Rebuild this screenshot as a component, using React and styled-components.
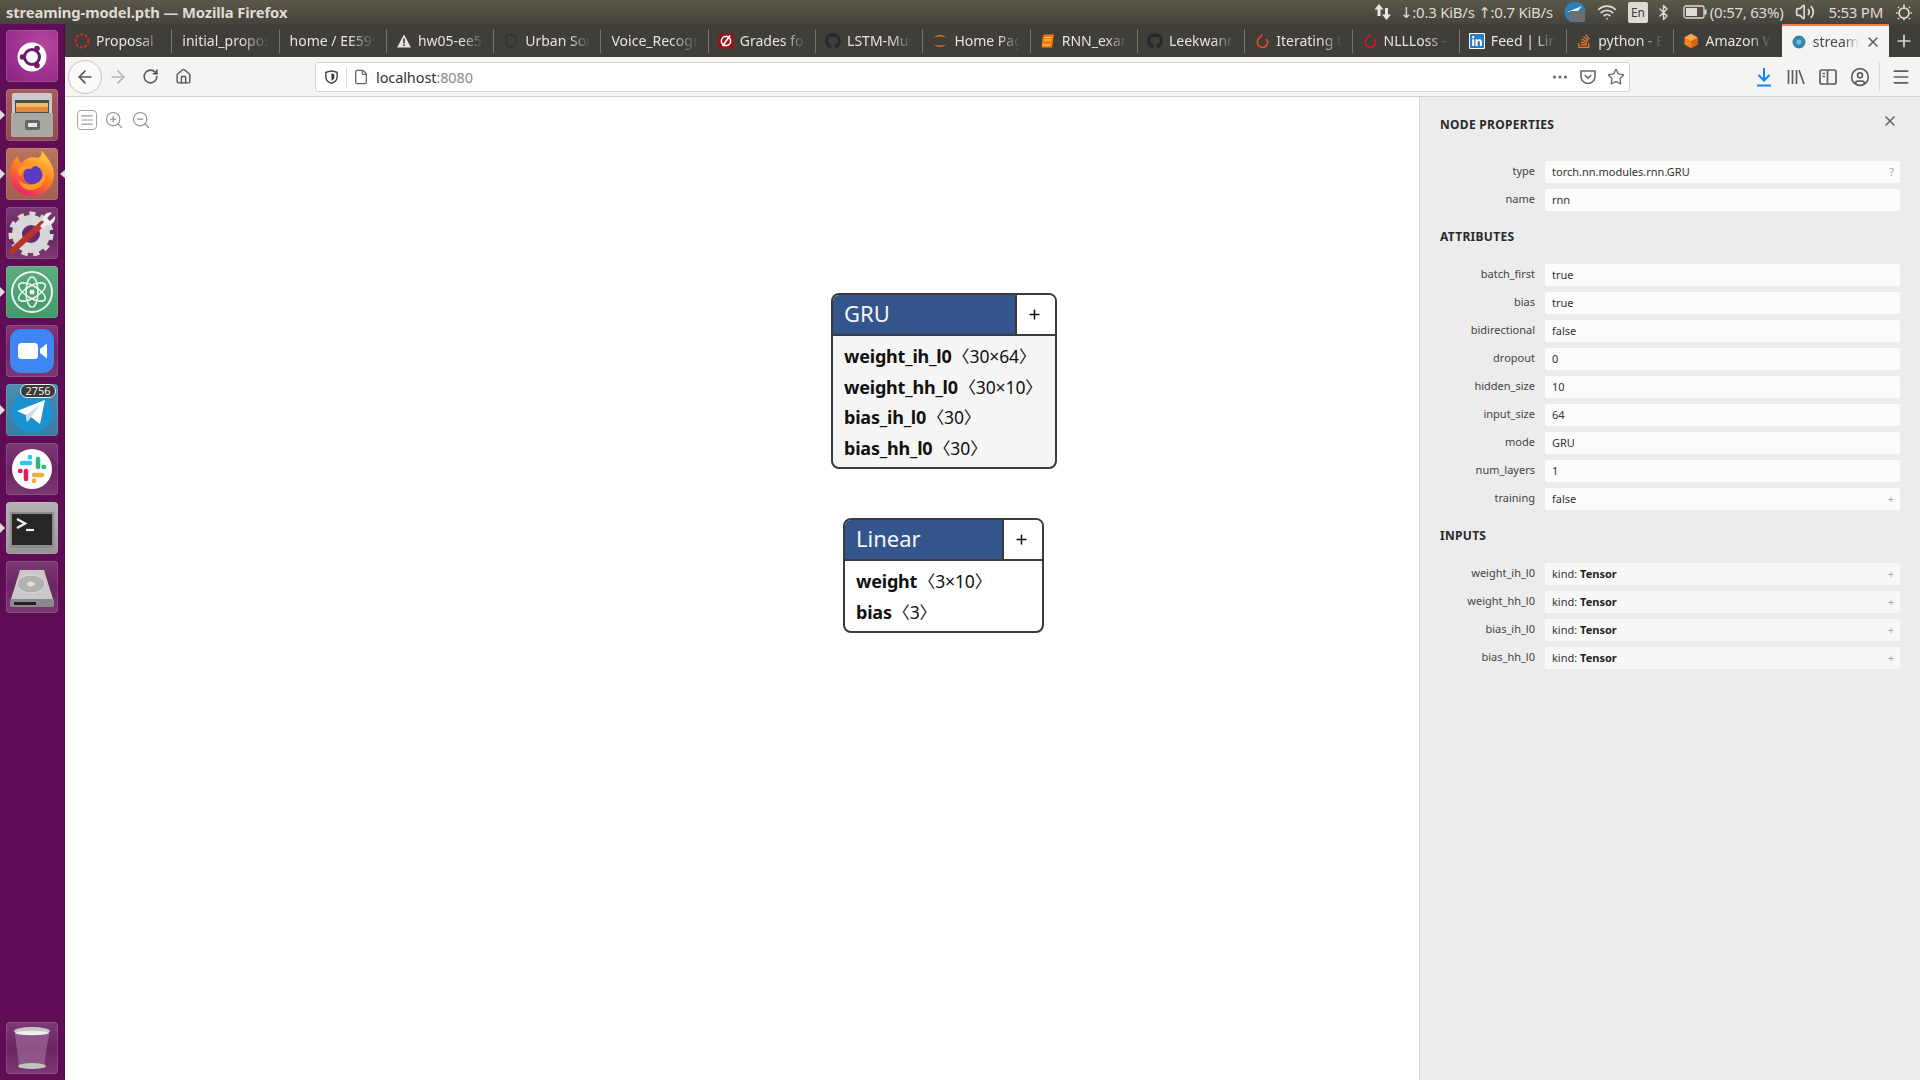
import React from "react";
import styled, { createGlobalStyle } from "styled-components";
import {
  ArrowLeft, ArrowRight, RotateCw, Home, File, Star, Menu, Plus, X, Bluetooth, Wifi, Volume2,
  ZoomIn, ZoomOut, CircleUser, AlignJustify,
} from "lucide-react";
import { FaGithub, FaLinkedin, FaStackOverflow } from "react-icons/fa";

const UI_FONT = `"Noto Sans", "Open Sans", "DejaVu Sans", sans-serif`;

const GlobalStyle = createGlobalStyle`
  html, body { margin: 0; padding: 0; background: #fff; }
  * { box-sizing: border-box; }
  body { font-family: ${UI_FONT}; }
`;

const Screen = styled.div`
  width: 1920px;
  height: 1080px;
  overflow: hidden;
  display: flex;
  flex-direction: column;
`;

const TitleBar = styled.div`
  height: 24px;
  flex: none;
  display: flex;
  align-items: center;
  justify-content: space-between;
  padding: 0 0 0 6px;
  background: linear-gradient(#5b574a, #45433c);
  color: #dfdbd2;
`;

const WindowTitle = styled.div`
  font-size: 14.75px;
  font-weight: 700;
  letter-spacing: -0.1px;
  white-space: nowrap;
`;

const Tray = styled.div`
  display: flex;
  align-items: center;
  height: 24px;
  font-size: 15px;
  letter-spacing: -0.25px;
  white-space: nowrap;
  color: #dfdbd2;
`;

const TrayItem = styled.div`
  display: flex;
  align-items: center;
  margin-left: ${(p) => p.$ml || 0}px;
`;

const LangBadge = styled.div`
  width: 20px;
  height: 21px;
  background: #dfdbd2;
  color: #3c3b37;
  border-radius: 2px;
  font-size: 12px;
  line-height: 21px;
  text-align: center;
`;

const Body = styled.div`
  flex: 1;
  display: flex;
  min-height: 0;
`;

const Dock = styled.div`
  width: 65px;
  flex: none;
  background: #5f0e56;
  padding: 6px 0 6px 6px;
  display: flex;
  flex-direction: column;
  gap: 7px;
  border-right: 1px solid #4f0a47;
`;

const Tile = styled.div`
  position: relative;
  width: 52px;
  height: 52px;
  border-radius: 4px;
  background: ${(p) => p.$bg || "linear-gradient(#7d3a74, #6b2462 50%, #7a3a72)"};
  box-shadow: inset 0 0 0 1px rgba(255, 255, 255, 0.12);
  margin-top: ${(p) => (p.$bottom ? "auto" : "0")};

  svg { display: block; }
`;

const RunMark = styled.span`
  position: absolute;
  top: 21px;
  left: ${(p) => (p.$right ? "54px" : "-6px")};
  width: 0;
  height: 0;
  border-top: 5px solid transparent;
  border-bottom: 5px solid transparent;
  ${(p) => (p.$right ? "border-right: 6px solid #ddd;" : "border-left: 5px solid #ddd;")}
`;

const Badge = styled.span`
  position: absolute;
  top: 0;
  right: 2px;
  width: 36px;
  height: 14px;
  background: #3a3a3a;
  border: 1px solid #eee;
  border-radius: 7px;
  color: #eee;
  font-size: 11px;
  line-height: 12px;
  text-align: center;
`;

const Browser = styled.div`
  flex: 1;
  min-width: 0;
  display: flex;
  flex-direction: column;
`;

const TabStrip = styled.div`
  height: 33px;
  flex: none;
  display: flex;
  background: #3f3e39;
`;

const Tab = styled.div`
  width: ${(p) => (p.$active ? "107px" : "107.3px")};
  flex: none;
  position: relative;
  display: flex;
  align-items: center;
  gap: 6px;
  padding-left: ${(p) => (p.$plain ? "10px" : "9px")};
  padding-right: ${(p) => (p.$active ? 8 : 11)}px;
  font-size: 14px;
  white-space: nowrap;
  color: ${(p) => (p.$active ? "#4a4a4f" : "#e6e3dc")};
  background: ${(p) => (p.$active ? "#f5f4f3" : "transparent")};
  border-top: ${(p) => (p.$active ? "2px solid #e8805a" : "none")};

  &::after {
    content: "";
    display: ${(p) => (p.$active || p.$last ? "none" : "block")};
    position: absolute;
    right: 0;
    top: 5px;
    bottom: 4px;
    width: 1px;
    background: #77756f;
  }
`;

const TabLabel = styled.span`
  flex: 1;
  min-width: 0;
  overflow: hidden;
  -webkit-mask-image: linear-gradient(to right, #000 68%, transparent 100%);
  mask-image: linear-gradient(to right, #000 68%, transparent 100%);
`;

const NewTab = styled.div`
  flex: 1;
  display: flex;
  align-items: center;
  justify-content: center;
  color: #d8d5ce;
`;

const Toolbar = styled.div`
  height: 40px;
  flex: none;
  display: flex;
  align-items: center;
  padding-left: 3px;
  background: #f5f4f3;
  border-bottom: 1px solid #cfcfcf;
  color: #5a5a5e;
`;

const NavButton = styled.div`
  width: ${(p) => (p.$round ? 34 : 32.5)}px;
  height: ${(p) => (p.$round ? 34 : 33)}px;
  flex: none;
  display: flex;
  align-items: center;
  justify-content: center;
  border-radius: 50%;
  background: ${(p) => (p.$round ? "#fafafa" : "transparent")};
  border: ${(p) => (p.$round ? "1px solid #c4c4c4" : "none")};
  color: ${(p) => (p.$muted ? "#b4b4b4" : "#55555a")};
`;

const UrlBar = styled.div`
  width: 1315px;
  height: 30px;
  flex: none;
  margin-left: 115.5px;
  display: flex;
  align-items: center;
  background: #fff;
  border: 1px solid #d4d4d4;
  border-radius: 3px;
  padding: 0 0 0 8px;
  font-size: 14.5px;
  color: #333;
`;

const UrlSep = styled.span`
  width: 1px;
  height: 20px;
  background: #ddd;
  margin: 0 6px 0 7px;
`;

const UrlHost = styled.span`
  margin-left: 7px;
  letter-spacing: -0.1px;
`;

const UrlPort = styled.span`
  color: #8a8a8a;
`;

const UrlActions = styled.div`
  margin-left: auto;
  display: flex;
  align-items: center;
  gap: 10px;
  padding-right: 4px;
  color: #6a6a6e;
`;

const ToolGroup = styled.div`
  display: flex;
  align-items: center;
  margin-left: 124px;
  gap: 12px;
  color: #5f5f64;
`;

const ToolSep = styled.span`
  width: 1px;
  height: 30px;
  background: #dcdcdc;
  margin: 0 -1px 0 -3px;
`;

const Content = styled.div`
  flex: 1;
  display: flex;
  min-height: 0;
`;

const Canvas = styled.div`
  flex: 1;
  position: relative;
  background: #fff;
`;

const CanvasTools = styled.div`
  position: absolute;
  left: 12px;
  top: 13px;
  display: flex;
  align-items: center;
  gap: 7px;
  color: #8f8f8f;
`;

const ListIcon = styled.div`
  width: 20px;
  height: 20px;
  border: 1.5px solid #a4a4a4;
  border-radius: 4px;
  display: flex;
  align-items: center;
  justify-content: center;
  color: #9a9a9a;
`;

const Node = styled.div`
  position: absolute;
  left: ${(p) => p.$x}px;
  top: ${(p) => p.$y}px;
  width: ${(p) => p.$w}px;
  border: 2px solid #3b3b3b;
  border-radius: 8px;
  overflow: hidden;
  background: ${(p) => p.$bg};
  font-family: ${UI_FONT};
`;

const NodeHeader = styled.div`
  height: 41px;
  display: flex;
  border-bottom: 2px solid #3b3b3b;
`;

const NodeTitle = styled.div`
  flex: 1;
  background: #34558b;
  color: #f4f6fa;
  font-size: 22px;
  line-height: 36px;
  padding-left: 11px;
`;

const NodeButton = styled.div`
  width: 40px;
  flex: none;
  background: #fff;
  border-left: 2px solid #3b3b3b;
  padding-right: 3px;
  display: flex;
  align-items: center;
  justify-content: center;
  color: #111;
`;

const NodeBody = styled.div`
  padding: 5px 11px 4px;
`;

const NodeRow = styled.div`
  height: 30.6px;
  line-height: 30.6px;
  font-size: 18px;
  color: #111;
  white-space: nowrap;
`;

const AttrName = styled.span`
  font-weight: 700;
  letter-spacing: -0.2px;
`;

const Shape = styled.span`
  margin-left: 1px;
  font-size: 17.5px;
  font-weight: 400;
  letter-spacing: -0.1px;
`;

const Bracket = styled.span`
  font-family: "Noto Sans CJK SC", "DejaVu Sans", sans-serif;
  font-size: 17px;
`;

const Panel = styled.aside`
  width: 501px;
  flex: none;
  background: #ececec;
  border-left: 1px solid #d8d8d8;
  position: relative;
  padding-top: 1px;
  font-size: 11px;
  color: #333;
`;

const PanelHead = styled.div`
  height: 63px;
  padding: 19px 0 0 20px;
`;

const SectionTitle = styled.div`
  font-size: 12px;
  font-weight: 700;
  line-height: 16px;
  color: #2a2a2a;
  letter-spacing: 0.3px;
`;

const SectionBlock = styled.div`
  height: 47px;
  padding: 12px 0 0 20px;
`;

const CloseBtn = styled.div`
  position: absolute;
  top: 16px;
  right: 22px;
  color: #666;
  display: flex;
`;

const PropRow = styled.div`
  display: grid;
  grid-template-columns: 115px 355px;
  column-gap: 10px;
  height: 22px;
  margin-bottom: 6px;
`;

const PropLabel = styled.div`
  text-align: right;
  line-height: 20px;
  color: #444;
  white-space: nowrap;
`;

const PropValue = styled.div`
  display: flex;
  align-items: center;
  justify-content: space-between;
  padding: 0 6px 2px 7px;
  background: ${(p) => (p.$soft ? "#f8f8f8" : "#fcfcfc")};
  border-radius: 2px;
  color: #333;
  white-space: nowrap;
`;

const PropHint = styled.span`
  color: #aaa;
  font-size: 11px;
`;

const Strong = styled.b`
  font-weight: 700;
  color: #222;
`;

const Fav = ({ children }) => (
  <svg width="16" height="16" viewBox="0 0 16 16" style={{ flex: "none" }}>{children}</svg>
);

const favicons = {
  ring: <Fav><circle cx="8" cy="8" r="6.4" fill="none" stroke="#e0262d" strokeWidth="2" strokeDasharray="3 1.6" /></Fav>,
  warn: <Fav><path d="M8 1.5 15 14.5H1Z" fill="#e9e6df" /><rect x="7.2" y="5.5" width="1.6" height="5" fill="#3f3e39" /><rect x="7.2" y="11.4" width="1.6" height="1.6" fill="#3f3e39" /></Fav>,
  shield: <Fav><path d="M3 3 8 1.5 13 3V9C13 12 10 14 8 14.5 6 14 3 12 3 9Z" fill="none" stroke="#2d3138" strokeWidth="1.4" /></Fav>,
  grades: <Fav><rect x="0.5" y="0.5" width="15" height="15" fill="#a30c12" /><circle cx="8" cy="8" r="4.6" fill="none" stroke="#fff" strokeWidth="1.6" /><path d="M4.6 13 12 2.5" stroke="#fff" strokeWidth="1.6" /></Fav>,
  github: <FaGithub size={16} color="#24292e" style={{ flex: "none" }} />,
  jupyter: <Fav><path d="M2 5C4 1 12 1 14 5 12 3 4 3 2 5ZM2 11C4 15 12 15 14 11 12 13 4 13 2 11Z" fill="#e8711f" /></Fav>,
  book: <Fav><path d="M4 1.5H14L12 14.5H1.5L2.8 3Z" fill="#f57c00" /><path d="M4.5 4.5H11.5M4 7H11M3 12H10.5" stroke="#ffd9a8" strokeWidth="0.9" /></Fav>,
  torch: <Fav><path d="M8.5 1.5 5 5.2C2.5 7.5 3 11 5 13 7 15 10.5 15 12.3 12.8 14 10.7 13.7 7.9 12 6" fill="none" stroke="#ee4c2c" strokeWidth="1.5" /></Fav>,
  torchRed: <Fav><path d="M8.5 1.5 5 5.2C2.5 7.5 3 11 5 13 7 15 10.5 15 12.3 12.8 14 10.7 13.7 7.9 12 6" fill="none" stroke="#e3122c" strokeWidth="1.5" /></Fav>,
  linkedin: <FaLinkedin size={16} color="#2a78c8" style={{ flex: "none", background: "#fff", borderRadius: 1 }} />,
  so: <FaStackOverflow size={16} color="#e87922" style={{ flex: "none" }} />,
  cube: <Fav><path d="M8 0.8 14.5 4.4V11.6L8 15.2 1.5 11.6V4.4Z" fill="#f58220" /><path d="M8 8 14.5 4.4V11.6L8 15.2Z" fill="#d9660f" /><path d="M8 0.8 14.5 4.4 8 8 1.5 4.4Z" fill="#fba64b" /></Fav>,
  stream: <Fav><circle cx="8" cy="8" r="6.5" fill="#2f87b0" /><circle cx="8" cy="8" r="2.5" fill="#7fb7d2" /></Fav>,
};

const tabs = [
  { text: "Proposal", icon: "ring" },
  { text: "initial_proposal" },
  { text: "home / EE599" },
  { text: "hw05-ee599", icon: "warn" },
  { text: "Urban Sound", icon: "shield" },
  { text: "Voice_Recognition" },
  { text: "Grades for", icon: "grades" },
  { text: "LSTM-Music", icon: "github" },
  { text: "Home Page", icon: "jupyter" },
  { text: "RNN_example", icon: "book" },
  { text: "Leekwann", icon: "github" },
  { text: "Iterating th", icon: "torch" },
  { text: "NLLLoss —", icon: "torchRed" },
  { text: "Feed | LinkedIn", icon: "linkedin" },
  { text: "python - Bat", icon: "so" },
  { text: "Amazon Web", icon: "cube", last: true },
];

const PocketIcon = () => (
  <svg width="18" height="18" viewBox="0 0 18 18" fill="none" stroke="currentColor" strokeWidth="1.6">
    <path d="M2 3H16V8.5C16 12.5 12.5 15.5 9 15.5 5.5 15.5 2 12.5 2 8.5Z" />
    <path d="M5.8 7.2 9 10.2 12.2 7.2" />
  </svg>
);

const ShieldIcon = () => (
  <svg width="15" height="16" viewBox="0 0 16 16" fill="none" stroke="currentColor" strokeWidth="1.4">
    <path d="M8 1.5 14 3V8C14 11.5 10.5 14 8 14.8 5.5 14 2 11.5 2 8V3Z" />
    <path d="M8 4 11 5V8C11 10 9.5 11.3 8 12Z" fill="currentColor" stroke="none" />
  </svg>
);

const DotsIcon = () => (
  <svg width="18" height="18" viewBox="0 0 18 18" fill="currentColor">
    <circle cx="3.5" cy="9" r="1.6" /><circle cx="9" cy="9" r="1.6" /><circle cx="14.5" cy="9" r="1.6" />
  </svg>
);

const DownloadIcon = () => (
  <svg width="20" height="22" viewBox="0 0 20 22" fill="none" stroke="#0a84ff" strokeWidth="2">
    <path d="M10 2V14M4.5 9 10 14.5 15.5 9" /><path d="M3 19.5H17" />
  </svg>
);

const LibraryIcon = () => (
  <svg width="20" height="20" viewBox="0 0 20 20" fill="none" stroke="currentColor" strokeWidth="1.7">
    <path d="M2.5 3V17M6.5 3V17M10.5 3V17M13 3 18 17" />
  </svg>
);

const SidebarIcon = () => (
  <svg width="20" height="20" viewBox="0 0 20 20" fill="none" stroke="currentColor" strokeWidth="1.7">
    <rect x="2" y="3" width="16" height="14" rx="2" /><path d="M9.5 3V17" /><path d="M4.5 6.5H7M4.5 9.5H7" />
  </svg>
);

const PowerGear = () => (
  <svg width="18" height="18" viewBox="0 0 18 18" fill="none" stroke="#dfdbd2" strokeWidth="1.7">
    <circle cx="9" cy="10" r="5" />
    <path d="M9 1.5V6M9 15V17M2.5 10H1M17 10H15.5M4 5 3 4M14 5 15 4M4 15 3 16M14 15 15 16" />
  </svg>
);

const NetArrows = () => (
  <svg width="20" height="20" viewBox="0 0 20 20" fill="#e8e5dd">
    <path d="M6 2 10.5 7.5H7.5V14H4.5V7.5H1.5Z" /><path d="M13.5 18 9 12.5H12V6H15V12.5H18Z" />
  </svg>
);

const TelegramTray = () => (
  <svg width="22" height="22" viewBox="0 0 22 22">
    <circle cx="11" cy="11" r="10.5" fill="#2b7fb8" />
    <path d="M3 11 18 5 14 10Z" fill="#e8eef2" />
    <rect x="5" y="10" width="16" height="11" rx="2" fill="#6a7076" />
  </svg>
);

const BatteryIcon = () => (
  <svg width="24" height="14" viewBox="0 0 24 14" fill="none">
    <rect x="1" y="1" width="20" height="12" rx="2" stroke="#dfdbd2" strokeWidth="1.3" />
    <rect x="3" y="3" width="11" height="8" fill="#dfdbd2" />
    <rect x="21.5" y="4.5" width="2" height="5" fill="#dfdbd2" />
  </svg>
);

const UbuntuIcon = () => (
  <svg width="52" height="52" viewBox="0 0 52 52">
    <circle cx="26" cy="27" r="14.5" fill="#fff" />
    <circle cx="26" cy="27" r="7.5" fill="none" stroke="#6b1d63" strokeWidth="3" />
    <circle cx="16.5" cy="27" r="2.8" fill="#6b1d63" /><circle cx="31" cy="18.5" r="2.8" fill="#6b1d63" /><circle cx="31" cy="35.5" r="2.8" fill="#6b1d63" />
  </svg>
);

const FilesIcon = () => (
  <svg width="52" height="52" viewBox="0 0 52 52">
    <rect x="6" y="4" width="40" height="24" rx="1.5" fill="#c9c9c9" />
    <rect x="9" y="11" width="34" height="14" fill="#4a4a4a" />
    <rect x="10" y="14" width="32" height="4" fill="#f3b868" />
    <rect x="10" y="18" width="32" height="5" fill="#e2883e" />
    <path d="M5 24H47V46C47 47.5 46 48 45 48H7C6 48 5 47.5 5 46Z" fill="#a9a8a3" />
    <rect x="19" y="31" width="15" height="10" rx="2" fill="#666" />
    <rect x="22" y="34" width="9" height="4" fill="#e8e8e8" />
  </svg>
);

const FirefoxIcon = () => (
  <svg width="52" height="52" viewBox="0 0 52 52">
    <defs>
      <linearGradient id="ffx" x1="0.7" y1="0" x2="0.2" y2="1">
        <stop offset="0" stopColor="#ffd23c" /><stop offset="0.5" stopColor="#ff7a1e" /><stop offset="1" stopColor="#e6197a" />
      </linearGradient>
    </defs>
    <path d="M35 2C40 8 47 15 48 26 48 39 38 48 26 48 13 48 4 38 4 26 4 18 8 11 12 8 12 12 14 15 16 15 19 10 26 8 32 10 36 8 36 5 35 2Z" fill="url(#ffx)" />
    <circle cx="27" cy="27" r="9.5" fill="#5b3bc4" />
    <path d="M12 22C16 16 24 14 32 17 28 18 26 19 25 21 20 20 16 22 15 28 13 28 12 25 12 22Z" fill="#ff9a28" />
    <path d="M38 20C42 30 36 42 25 42 18 42 13 37 13 32 18 38 31 39 36 30 37 27 38 24 38 20Z" fill="#ff9a28" />
  </svg>
);

const SettingsIcon = () => (
  <svg width="52" height="52" viewBox="0 0 52 52">
    <circle cx="25" cy="27" r="14" fill="none" stroke="#d8d8d8" strokeWidth="10" />
    <circle cx="25" cy="27" r="20" fill="none" stroke="#d8d8d8" strokeWidth="5" strokeDasharray="6 5.5" />
    <path d="M6 44 36 17" stroke="#b5342c" strokeWidth="6" strokeLinecap="round" />
    <path d="M34 19 38 15C36 10 40 4 46 6L41 11 44 14 49 9C50 15 45 19 40 18L37 22Z" fill="#eee" />
  </svg>
);

const AtomIcon = () => (
  <svg width="52" height="52" viewBox="0 0 52 52" fill="none" stroke="#e8f4ec" strokeWidth="1.6">
    <circle cx="26" cy="26" r="20" strokeWidth="2" />
    <ellipse cx="26" cy="26" rx="15" ry="6" transform="rotate(30 26 26)" />
    <ellipse cx="26" cy="26" rx="15" ry="6" transform="rotate(90 26 26)" />
    <ellipse cx="26" cy="26" rx="15" ry="6" transform="rotate(150 26 26)" />
    <circle cx="26" cy="26" r="2.5" fill="#e8f4ec" stroke="none" />
  </svg>
);

const ZoomAppIcon = () => (
  <svg width="52" height="52" viewBox="0 0 52 52">
    <rect x="4" y="4" width="44" height="44" rx="11" fill="#3f86f5" />
    <rect x="12" y="18" width="20" height="16" rx="3.5" fill="#fff" />
    <path d="M34 24 41 18.5V33.5L34 28Z" fill="#fff" />
  </svg>
);

const TelegramIcon = () => (
  <svg width="52" height="52" viewBox="0 0 52 52">
    <circle cx="26" cy="28" r="21" fill="#1c93d0" />
    <path d="M11 27 39 16 34 40 25 33 21 38 20 31Z" fill="#fff" />
    <path d="M20 31 35 20 25 33 21 38Z" fill="#c8dcea" />
  </svg>
);

const SlackIcon = () => (
  <svg width="52" height="52" viewBox="0 0 52 52">
    <circle cx="26" cy="26" r="20" fill="#fff" />
    <g strokeWidth="4.5" strokeLinecap="round">
      <path d="M24 20H16" stroke="#36c5f0" /><path d="M24 14V14.5" stroke="#36c5f0" />
      <path d="M32 24V16" stroke="#2eb67d" /><path d="M38 24H37.5" stroke="#2eb67d" />
      <path d="M28 32H36" stroke="#ecb22e" /><path d="M28 38V37.5" stroke="#ecb22e" />
      <path d="M20 28V36" stroke="#e01e5a" /><path d="M14 28H14.5" stroke="#e01e5a" />
    </g>
  </svg>
);

const TerminalIcon = () => (
  <svg width="52" height="52" viewBox="0 0 52 52">
    <rect x="4" y="10" width="44" height="36" rx="1" fill="#8b8b8b" />
    <rect x="6" y="12" width="40" height="31" fill="#262626" />
    <path d="M11 17 19 21.5 11 26" fill="none" stroke="#eee" strokeWidth="2.4" />
    <path d="M20 28H28" stroke="#eee" strokeWidth="2.2" />
  </svg>
);

const DiskIcon = () => (
  <svg width="52" height="52" viewBox="0 0 52 52">
    <path d="M14 9H38L47 38H5Z" fill="#c9c9c9" />
    <ellipse cx="25" cy="23" rx="14" ry="9" fill="#b2b2b2" stroke="#dcdcdc" />
    <ellipse cx="25" cy="23" rx="4" ry="2.5" fill="#dcdcdc" />
    <rect x="4" y="38" width="44" height="8" rx="1.5" fill="#8a8a8a" />
    <rect x="8" y="41" width="22" height="3" fill="#222" />
  </svg>
);

const TrashIcon = () => (
  <svg width="52" height="52" viewBox="0 0 52 52">
    <path d="M9 12 13 44H38L43 12Z" fill="#a77ba4" opacity="0.55" />
    <ellipse cx="26" cy="9" rx="18" ry="4" fill="#c6c6c6" />
    <ellipse cx="26" cy="11" rx="17" ry="2.2" fill="#f0f0f0" />
    <ellipse cx="26" cy="44" rx="14" ry="3" fill="#c4c4c4" />
  </svg>
);

const attributes = [
  ["batch_first", "true"],
  ["bias", "true"],
  ["bidirectional", "false"],
  ["dropout", "0"],
  ["hidden_size", "10"],
  ["input_size", "64"],
  ["mode", "GRU"],
  ["num_layers", "1"],
  ["training", "false", "+"],
];

const inputs = ["weight_ih_l0", "weight_hh_l0", "bias_ih_l0", "bias_hh_l0"];

const ModelNode = ({ title, x, y, w, bg, rows }) => (
  <Node $x={x} $y={y} $w={w} $bg={bg}>
    <NodeHeader>
      <NodeTitle>{title}</NodeTitle>
      <NodeButton><Plus size={15} strokeWidth={2.4} /></NodeButton>
    </NodeHeader>
    <NodeBody>
      {rows.map(([name, shape]) => (
        <NodeRow key={name}>
          <AttrName>{name}</AttrName>
          <Shape><Bracket>〈</Bracket>{shape}<Bracket>〉</Bracket></Shape>
        </NodeRow>
      ))}
    </NodeBody>
  </Node>
);

const App = () => (
  <Screen>
    <GlobalStyle />
    <TitleBar>
      <WindowTitle>streaming-model.pth — Mozilla Firefox</WindowTitle>
      <Tray>
        <NetArrows />
        <TrayItem $ml={7}>↓:0.3 KiB/s ↑:0.7 KiB/s</TrayItem>
        <TrayItem $ml={11}><TelegramTray /></TrayItem>
        <TrayItem $ml={11}><Wifi size={20} strokeWidth={2} /></TrayItem>
        <TrayItem $ml={11}><LangBadge>En</LangBadge></TrayItem>
        <TrayItem $ml={7}><Bluetooth size={17} /></TrayItem>
        <TrayItem $ml={11}><BatteryIcon /></TrayItem>
        <TrayItem $ml={3}>(0:57, 63%)</TrayItem>
        <TrayItem $ml={12}><Volume2 size={20} /></TrayItem>
        <TrayItem $ml={13}>5:53 PM</TrayItem>
        <TrayItem $ml={12}><PowerGear /></TrayItem>
        <TrayItem $ml={7} />
      </Tray>
    </TitleBar>
    <Body>
      <Dock>
        <Tile $bg="radial-gradient(circle at 70% 30%, #b5469f, #8c2183)"><UbuntuIcon /></Tile>
        <Tile $bg="linear-gradient(#a85c5c, #8e4a52)"><RunMark /><FilesIcon /></Tile>
        <Tile $bg="linear-gradient(#b9735f, #a4604f)"><RunMark /><RunMark $right /><FirefoxIcon /></Tile>
        <Tile><SettingsIcon /></Tile>
        <Tile $bg="linear-gradient(#5dab7f, #3f9a68)"><RunMark /><AtomIcon /></Tile>
        <Tile><ZoomAppIcon /></Tile>
        <Tile $bg="linear-gradient(#4b8cb0, #3c7ba3)"><RunMark /><TelegramIcon /><Badge>2756</Badge></Tile>
        <Tile><SlackIcon /></Tile>
        <Tile $bg="linear-gradient(#b5b0b3, #989498)"><RunMark /><TerminalIcon /></Tile>
        <Tile><DiskIcon /></Tile>
        <Tile $bottom><TrashIcon /></Tile>
      </Dock>
      <Browser>
        <TabStrip>
          {tabs.map((tab) => (
            <Tab key={tab.text} $plain={!tab.icon} $last={tab.last}>
              {tab.icon && favicons[tab.icon]}
              <TabLabel>{tab.text}</TabLabel>
            </Tab>
          ))}
          <Tab $active>
            {favicons.stream}
            <TabLabel>streaming</TabLabel>
            <X size={16} color="#55555a" style={{ flex: "none" }} />
          </Tab>
          <NewTab><Plus size={20} /></NewTab>
        </TabStrip>
        <Toolbar>
          <NavButton $round><ArrowLeft size={20} /></NavButton>
          <NavButton $muted><ArrowRight size={20} /></NavButton>
          <NavButton><RotateCw size={17} strokeWidth={2.2} /></NavButton>
          <NavButton><Home size={17} strokeWidth={2} /></NavButton>
          <UrlBar>
            <ShieldIcon />
            <UrlSep />
            <File size={16} color="#6a6a6e" />
            <UrlHost>localhost<UrlPort>:8080</UrlPort></UrlHost>
            <UrlActions>
              <DotsIcon />
              <PocketIcon />
              <Star size={18} strokeWidth={1.8} />
            </UrlActions>
          </UrlBar>
          <ToolGroup>
            <DownloadIcon />
            <LibraryIcon />
            <SidebarIcon />
            <CircleUser size={20} />
            <ToolSep />
            <Menu size={20} />
          </ToolGroup>
        </Toolbar>
        <Content>
          <Canvas>
            <CanvasTools>
              <ListIcon><AlignJustify size={14} /></ListIcon>
              <ZoomIn size={20} strokeWidth={1.4} />
              <ZoomOut size={20} strokeWidth={1.4} />
            </CanvasTools>
            <ModelNode
              title="GRU" x={766} y={196} w={226} bg="#f5f5f5"
              rows={[
                ["weight_ih_l0", "30×64"],
                ["weight_hh_l0", "30×10"],
                ["bias_ih_l0", "30"],
                ["bias_hh_l0", "30"],
              ]}
            />
            <ModelNode
              title="Linear" x={778} y={421} w={201} bg="#fff"
              rows={[
                ["weight", "3×10"],
                ["bias", "3"],
              ]}
            />
          </Canvas>
          <Panel>
            <PanelHead><SectionTitle>NODE PROPERTIES</SectionTitle></PanelHead>
            <CloseBtn><X size={16} strokeWidth={2.4} /></CloseBtn>
            <PropRow>
              <PropLabel>type</PropLabel>
              <PropValue>torch.nn.modules.rnn.GRU<PropHint>?</PropHint></PropValue>
            </PropRow>
            <PropRow>
              <PropLabel>name</PropLabel>
              <PropValue>rnn</PropValue>
            </PropRow>
            <SectionBlock><SectionTitle>ATTRIBUTES</SectionTitle></SectionBlock>
            {attributes.map(([name, value, hint]) => (
              <PropRow key={name}>
                <PropLabel>{name}</PropLabel>
                <PropValue>{value}{hint && <PropHint>{hint}</PropHint>}</PropValue>
              </PropRow>
            ))}
            <SectionBlock><SectionTitle>INPUTS</SectionTitle></SectionBlock>
            {inputs.map((name) => (
              <PropRow key={name}>
                <PropLabel>{name}</PropLabel>
                <PropValue $soft><span>kind: <Strong>Tensor</Strong></span><PropHint>+</PropHint></PropValue>
              </PropRow>
            ))}
          </Panel>
        </Content>
      </Browser>
    </Body>
  </Screen>
);

export default App;
